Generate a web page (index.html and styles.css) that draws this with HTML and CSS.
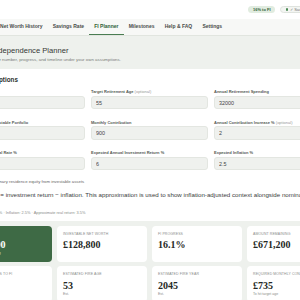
FILE: index.html
```html
<!DOCTYPE html>
<html lang="en-GB">
<head>
    <meta charset="UTF-8">
    <meta name="viewport" content="width=device-width, initial-scale=1.0">
    <title>FI Planner</title>
    <link rel="stylesheet" href="styles.css">
</head>
<body>
    <div class="shell">
        <header class="topbar">
            <div class="status">
                <span class="pill pill-fi">16% to FI</span>
                <span class="pill pill-save"><span class="dot"></span>✓ Saved</span>
            </div>
        </header>

        <nav class="tabs">
            <a href="#">Accounts</a>
            <a href="#">Net Worth History</a>
            <a href="#">Savings Rate</a>
            <a href="#" class="active">FI Planner</a>
            <a href="#">Milestones</a>
            <a href="#">Help &amp; FAQ</a>
            <a href="#">Settings</a>
        </nav>

        <section class="page-head">
            <h1>Independence Planner</h1>
            <p>Your number, progress, and timeline under your own assumptions.</p>
        </section>

        <section class="card assumptions">
            <h2>Assumptions</h2>
            <div class="fields">
                <label class="field">
                    <span class="label">Current Age</span>
                    <input type="text" value="35">
                </label>
                <label class="field">
                    <span class="label">Target Retirement Age <span class="opt">(optional)</span></span>
                    <input type="text" value="55">
                </label>
                <label class="field">
                    <span class="label">Annual Retirement Spending</span>
                    <input type="text" value="32000">
                </label>
                <label class="field">
                    <span class="label">Current Net Investable Portfolio</span>
                    <input type="text" value="128800">
                </label>
                <label class="field">
                    <span class="label">Monthly Contribution</span>
                    <input type="text" value="900">
                </label>
                <label class="field">
                    <span class="label">Annual Contribution Increase % <span class="opt">(optional)</span></span>
                    <input type="text" value="2">
                </label>
                <label class="field">
                    <span class="label">Target Withdrawal Rate %</span>
                    <input type="text" value="4">
                </label>
                <label class="field">
                    <span class="label">Expected Annual Investment Return %</span>
                    <input type="text" value="6">
                </label>
                <label class="field">
                    <span class="label">Expected Inflation %</span>
                    <input type="text" value="2.5">
                </label>
            </div>

            <label class="check"><input type="checkbox" checked> Exclude primary residence equity from investable assets</label>
            <p class="note">Real return = investment return − inflation. This approximation is used to show inflation-adjusted context alongside nominal projections.</p>
            <p class="small">Nominal return: 6% · Inflation: 2.5% · Approximate real return: 3.5%</p>
        </section>

        <section class="stats">
            <div class="stat stat-main">
                <span class="stat-label">FI Number</span>
                <span class="stat-value">£800,000</span>
                <span class="stat-sub">25× annual spending</span>
            </div>
            <div class="stat">
                <span class="stat-label">Investable Net Worth</span>
                <span class="stat-value">£128,800</span>
            </div>
            <div class="stat">
                <span class="stat-label">FI Progress</span>
                <span class="stat-value">16.1%</span>
            </div>
            <div class="stat">
                <span class="stat-label">Amount Remaining</span>
                <span class="stat-value">£671,200</span>
            </div>

            <div class="stat">
                <span class="stat-label">Estimated Years to FI</span>
                <span class="stat-value">18</span>
                <span class="stat-sub">Est.</span>
            </div>
            <div class="stat">
                <span class="stat-label">Estimated FIRE Age</span>
                <span class="stat-value">53</span>
                <span class="stat-sub">Est.</span>
            </div>
            <div class="stat">
                <span class="stat-label">Estimated FIRE Year</span>
                <span class="stat-value">2045</span>
                <span class="stat-sub">Est.</span>
            </div>
            <div class="stat">
                <span class="stat-label">Required Monthly Contribution</span>
                <span class="stat-value">£735</span>
                <span class="stat-sub">To hit target age</span>
            </div>
        </section>
    </div>
</body>
</html>
```

FILE: styles.css
```css
* {
    box-sizing: border-box;
    margin: 0;
    padding: 0;
}

body {
    font-family: 'Liberation Sans', Arial, sans-serif;
    background-color: #eef1ed;
    color: #333;
    overflow: hidden;
}

.shell {
    width: 395px;
    margin-left: -48px;
}

/* top bar */
.topbar {
    display: flex;
    align-items: center;
    justify-content: flex-end;
    height: 19px;
    padding: 0 36px 0 10px;
    background-color: #fff;
}

.status {
    display: flex;
    align-items: center;
    gap: 5px;
}

.pill {
    display: flex;
    align-items: center;
    height: 7.5px;
    padding: 0 4.5px;
    border-radius: 10px;
    font-size: 4px;
    font-weight: bold;
}

.pill-fi {
    background-color: #e1ece0;
    color: #2f5e36;
}

.pill-save {
    gap: 2px;
    background-color: #f3f5f2;
    border: 0.5px solid #dfe3de;
    color: #777;
    font-weight: normal;
}

.dot {
    width: 2.5px;
    height: 2.5px;
    border-radius: 50%;
    background-color: #4b8a55;
}

/* tabs */
.tabs {
    display: flex;
    height: 16.5px;
    padding-left: 10px;
    background-color: #f7f8f6;
    border-bottom: 1px solid #e1e5df;
}

.tabs a {
    display: flex;
    align-items: center;
    padding: 0 5.1px;
    font-size: 5px;
    font-weight: bold;
    color: #4a4d4a;
    text-decoration: none;
    border-bottom: 1.5px solid transparent;
}

.tabs a.active {
    color: #2f5e36;
    border-bottom-color: #4a7d52;
}

/* page heading */
.page-head {
    padding: 10px 0 7px 40px;
}

.page-head h1 {
    font-size: 7.6px;
    font-weight: normal;
    line-height: 9px;
    color: #343734;
}

.page-head p {
    margin-top: 2px;
    font-size: 4.4px;
    line-height: 5.5px;
    color: #7a7d7a;
}

/* assumptions card */
.card {
    margin: 0 10px;
    padding: 7px 6px 6px;
    background-color: #fff;
}

.card h2 {
    padding-left: 10px;
    margin-bottom: 5.75px;
    font-size: 6.3px;
    line-height: 7.5px;
    color: #2d302d;
}

.fields {
    display: grid;
    grid-template-columns: repeat(3, 1fr);
    gap: 10.5px 6px;
}

.field {
    display: flex;
    flex-direction: column;
    gap: 1.5px;
}

.label {
    font-size: 4px;
    line-height: 5px;
    font-weight: bold;
    color: #555a55;
    white-space: nowrap;
}

.opt {
    font-weight: normal;
    color: #999;
}

.field input {
    width: 100%;
    height: 13.5px;
    padding: 0 4px;
    font-family: inherit;
    font-size: 5.4px;
    color: #444;
    background-color: #eff1ee;
    border: 0.5px solid #e3e6e1;
    border-radius: 3px;
}

.check {
    display: flex;
    align-items: center;
    gap: 3px;
    margin-top: 8.75px;
    font-size: 4.3px;
    line-height: 5.5px;
    color: #666;
}

.check input {
    width: 6px;
    height: 6px;
    margin: 0;
    accent-color: #3e6a45;
}

.note {
    margin-top: 6px;
    font-size: 6.2px;
    line-height: 7px;
    color: #3d403d;
    white-space: nowrap;
}

.small {
    margin-top: 11.5px;
    padding-left: 1px;
    font-size: 3.9px;
    line-height: 5px;
    color: #8a8d8a;
}

/* stat cards */
.stats {
    display: grid;
    grid-template-columns: repeat(4, 1fr);
    gap: 4.5px 5px;
    margin: 5px 10px 0;
}

.stat {
    display: flex;
    flex-direction: column;
    padding: 6px 6px;
    background-color: #fff;
    border-radius: 4px;
}

.stat-label {
    font-size: 3.5px;
    line-height: 4.5px;
    text-transform: uppercase;
    letter-spacing: 0.1px;
    color: #8b8e8b;
    white-space: nowrap;
}

.stat-value {
    margin-top: 3px;
    font-family: 'Liberation Serif', 'Times New Roman', serif;
    font-size: 10px;
    font-weight: bold;
    line-height: 11px;
    color: #252825;
}

.stat-sub {
    margin-top: 1px;
    font-size: 3.5px;
    line-height: 4.5px;
    color: #8b8e8b;
}

.stat-main {
    background-color: #3e6a45;
}

.stat-main .stat-label,
.stat-main .stat-sub {
    color: rgba(255, 255, 255, 0.75);
}

.stat-main .stat-value {
    color: #fff;
}
```
